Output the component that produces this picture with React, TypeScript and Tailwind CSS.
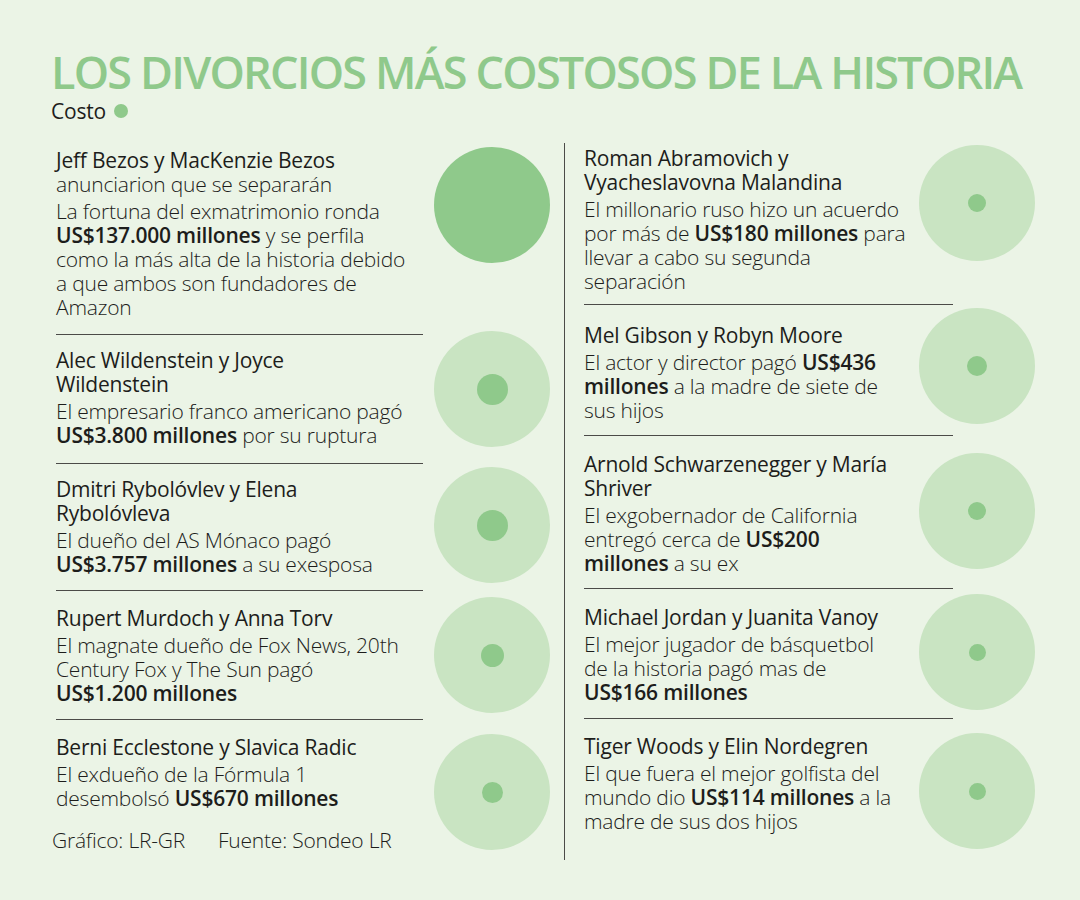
import React from "react";
import clsx from "clsx";

type Entry = {
    title: string[];
    sub?: string;
    body: React.ReactNode[];
    rowClass: string; // height + top padding of the text block
    circleClass: string; // vertical offset of the bubble
    dotClass?: string; // inner dot size (none = full bubble)
    last?: boolean;
};

const B = ({ children }: { children: React.ReactNode }) => <span className="font-semibold">{children}</span>;

const leftEntries: Entry[] = [
    {
        title: ["Jeff Bezos y MacKenzie Bezos"],
        sub: "anunciarion que se separarán",
        body: [
            "La fortuna del exmatrimonio ronda",
            <>
                <B>US$137.000 millones</B> y se perfila
            </>,
            "como la más alta de la historia debido",
            "a que ambos son fundadores de",
            "Amazon",
        ],
        rowClass: "h-[201px] pt-[14px]",
        circleClass: "mt-[13px]",
    },
    {
        title: ["Alec Wildenstein y Joyce", "Wildenstein"],
        body: [
            "El empresario franco americano pagó",
            <>
                <B>US$3.800 millones</B> por su ruptura
            </>,
        ],
        rowClass: "h-[129px] pt-[13px]",
        circleClass: "-mt-[4px]",
        dotClass: "w-[31px] h-[31px]",
    },
    {
        title: ["Dmitri Rybolóvlev y Elena", "Rybolóvleva"],
        body: [
            "El dueño del AS Mónaco pagó",
            <>
                <B>US$3.757 millones</B> a su exesposa
            </>,
        ],
        rowClass: "h-[127px] pt-[13px]",
        circleClass: "mt-[3px]",
        dotClass: "w-[31px] h-[31px]",
    },
    {
        title: ["Rupert Murdoch y Anna Torv"],
        body: ["El magnate dueño de Fox News, 20th", "Century Fox y The Sun pagó", <B>US$1.200 millones</B>],
        rowClass: "h-[129px] pt-[15px]",
        circleClass: "mt-[6px]",
        dotClass: "w-[23px] h-[23px]",
    },
    {
        title: ["Berni Ecclestone y Slavica Radic"],
        body: [
            "El exdueño de la Fórmula 1",
            <>
                desembolsó <B>US$670 millones</B>
            </>,
        ],
        rowClass: "pt-[15px]",
        circleClass: "mt-[14px]",
        dotClass: "w-[21px] h-[21px]",
        last: true,
    },
];

const rightEntries: Entry[] = [
    {
        title: ["Roman Abramovich y", "Vyacheslavovna Malandina"],
        body: [
            "El millonario ruso hizo un acuerdo",
            <>
                por más de <B>US$180 millones</B> para
            </>,
            "llevar a cabo su segunda",
            "separación",
        ],
        rowClass: "h-[173px] pt-[14px]",
        circleClass: "mt-[13px]",
        dotClass: "w-[18px] h-[18px]",
    },
    {
        title: ["Mel Gibson y Robyn Moore"],
        body: [
            <>
                El actor y director pagó <B>US$436</B>
            </>,
            <>
                <B>millones</B> a la madre de siete de
            </>,
            "sus hijos",
        ],
        rowClass: "h-[131px] pt-[18px]",
        circleClass: "mt-[3px]",
        dotClass: "w-[20px] h-[20px]",
    },
    {
        title: ["Arnold Schwarzenegger y María", "Shriver"],
        body: [
            "El exgobernador de California",
            <>
                entregó cerca de <B>US$200</B>
            </>,
            <>
                <B>millones</B> a su ex
            </>,
        ],
        rowClass: "h-[153px] pt-[16px]",
        circleClass: "mt-[17px]",
        dotClass: "w-[18px] h-[18px]",
    },
    {
        title: ["Michael Jordan y Juanita Vanoy"],
        body: ["El mejor jugador de básquetbol", "de la historia pagó mas de", <B>US$166 millones</B>],
        rowClass: "h-[130px] pt-[16px]",
        circleClass: "mt-[5px]",
        dotClass: "w-[17px] h-[17px]",
    },
    {
        title: ["Tiger Woods y Elin Nordegren"],
        body: [
            "El que fuera el mejor golfista del",
            <>
                mundo dio <B>US$114 millones</B> a la
            </>,
            "madre de sus dos hijos",
        ],
        rowClass: "pt-[15px]",
        circleClass: "mt-[14px]",
        dotClass: "w-[17px] h-[17px]",
        last: true,
    },
];

const Row = ({ entry, side, children }: { entry: Entry; side: "left" | "right"; children?: React.ReactNode }) => (
    <div className="flex items-start">
        <div
            className={clsx(
                "shrink-0",
                side === "left" ? "w-[367px]" : "w-[369px]",
                !entry.last && "border-b border-[#4b4b48]",
                entry.rowClass
            )}
        >
            {entry.title.map((t) => (
                <div key={t} className="whitespace-nowrap">
                    {t}
                </div>
            ))}
            {entry.sub && <div className="whitespace-nowrap font-light">{entry.sub}</div>}
            <div className="mt-[3px] font-light">
                {entry.body.map((line, i) => (
                    <div key={i} className="whitespace-nowrap">
                        {line}
                    </div>
                ))}
            </div>
            {children}
        </div>
        <div
            className={clsx(
                "shrink-0 w-[116px] h-[116px] rounded-full flex items-center justify-center",
                side === "left" ? "ml-[11px]" : "-ml-[34px]",
                entry.dotClass ? "bg-[#c9e4c2]" : "bg-[#8fc98b]",
                entry.circleClass
            )}
        >
            {entry.dotClass && <div className={clsx("rounded-full bg-[#8fc98b]", entry.dotClass)} />}
        </div>
    </div>
);

export default function App() {
    return (
        <div className="w-[1080px] h-[900px] overflow-hidden bg-[#ebf4e6] text-[#1d1d1b] font-['Open_Sans',sans-serif] text-[21px] leading-[24px] tracking-[-0.01em]">
            <div className="pl-[51px] pt-[49px]">
                <h1 className="text-[45px] leading-none font-semibold tracking-[-0.04em] text-[#8fc98b] whitespace-nowrap">
                    LOS DIVORCIOS MÁS COSTOSOS DE LA HISTORIA
                </h1>
                <div className="mt-[5px] flex items-center gap-[8px]">
                    <span>Costo</span>
                    <span className="w-[14px] h-[14px] rounded-full bg-[#8fc98b]" />
                </div>
            </div>

            <div className="mt-[9px] flex items-start">
                <div className="w-[550px] shrink-0 pl-[56px] pt-[2px]">
                    {leftEntries.map((e) => (
                        <Row key={e.title[0]} entry={e} side="left">
                            {e.last && (
                                <div className="mt-[18px] -ml-[4px] flex font-light whitespace-nowrap">
                                    <span className="w-[166px]">Gráfico: LR-GR</span>
                                    <span>Fuente: Sondeo LR</span>
                                </div>
                            )}
                        </Row>
                    ))}
                </div>
                <div className="ml-[14px] mt-[11px] w-px h-[717px] shrink-0 bg-[#4b4b48]" />
                <div className="pl-[19px]">
                    {rightEntries.map((e) => (
                        <Row key={e.title[0]} entry={e} side="right" />
                    ))}
                </div>
            </div>
        </div>
    );
}
